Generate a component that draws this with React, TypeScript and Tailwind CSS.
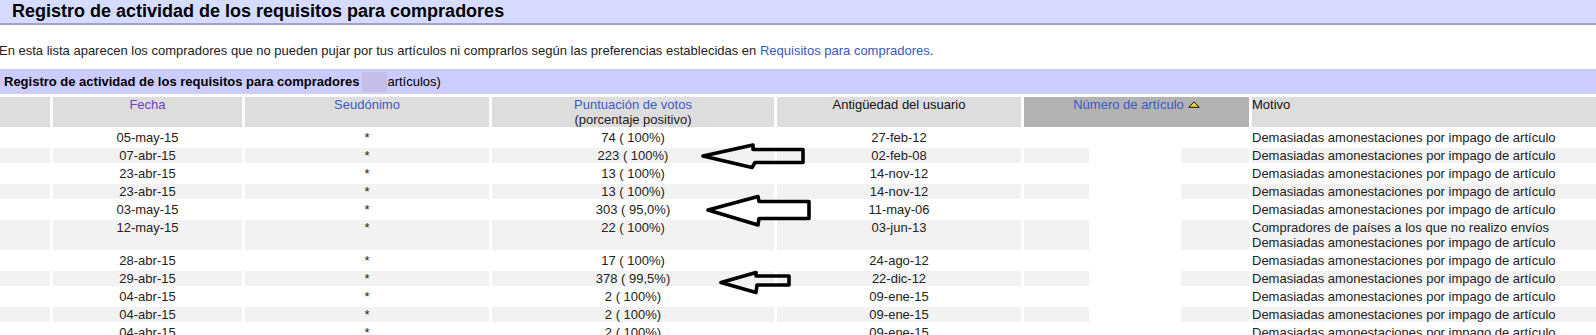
import React from 'react';

interface BlockedRow {
  date: string;
  score: string;
  since: string;
  reasons: string[];
}

const IMPAGO = 'Demasiadas amonestaciones por impago de artículo';

const rows: BlockedRow[] = [
  { date: '05-may-15', score: '74 ( 100%)', since: '27-feb-12', reasons: [IMPAGO] },
  { date: '07-abr-15', score: '223 ( 100%)', since: '02-feb-08', reasons: [IMPAGO] },
  { date: '23-abr-15', score: '13 ( 100%)', since: '14-nov-12', reasons: [IMPAGO] },
  { date: '23-abr-15', score: '13 ( 100%)', since: '14-nov-12', reasons: [IMPAGO] },
  { date: '03-may-15', score: '303 ( 95,0%)', since: '11-may-06', reasons: [IMPAGO] },
  {
    date: '12-may-15',
    score: '22 ( 100%)',
    since: '03-jun-13',
    reasons: ['Compradores de países a los que no realizo envíos', IMPAGO],
  },
  { date: '28-abr-15', score: '17 ( 100%)', since: '24-ago-12', reasons: [IMPAGO] },
  { date: '29-abr-15', score: '378 ( 99,5%)', since: '22-dic-12', reasons: [IMPAGO] },
  { date: '04-abr-15', score: '2 ( 100%)', since: '09-ene-15', reasons: [IMPAGO] },
  { date: '04-abr-15', score: '2 ( 100%)', since: '09-ene-15', reasons: [IMPAGO] },
  { date: '04-abr-15', score: '2 ( 100%)', since: '09-ene-15', reasons: [IMPAGO] },
];

// little yellow "sorted ascending" marker next to the column title
const SortUp = () => (
  <svg width="12" height="7" viewBox="0 0 12 7" className="inline-block ml-[4px] align-[1px]">
    <polygon points="6,0.8 11.2,6.3 0.8,6.3" fill="#f7d21a" stroke="#111" strokeWidth="1" />
  </svg>
);

// hand drawn arrows that were pasted over the screenshot
const Arrows = () => (
  <svg
    className="absolute left-0 top-0 pointer-events-none"
    width="1596"
    height="335"
    viewBox="0 0 1596 335"
  >
    <g fill="none" stroke="#000" strokeWidth="3.6" strokeLinejoin="round" strokeLinecap="round">
      <polygon points="703,156 753,145 753,149.5 803,149.5 803,162.5 755,162.5 752,167.5" />
      <polygon points="708,210 758,196.5 759,201.5 809,201.5 809,218.5 759,218.5 758,225" />
      <polygon points="721,282.5 756,272.5 756,276 789,276 789,285 757,285 756,292.5" />
    </g>
  </svg>
);

const App = () => {
  return (
    <div className="relative h-[335px] w-[1596px] overflow-hidden bg-white font-['Liberation_Sans',Arial,sans-serif] text-[13px] leading-[15px] text-[#222]">
      <div className="h-[25px] bg-[#d6dcff] border-b-2 border-[#a19fd4] pl-[12px] text-[18px] leading-[23px] font-bold text-black">
        Registro de actividad de los requisitos para compradores
      </div>

      <div className="mt-[18px] -ml-px h-[15px] whitespace-nowrap">
        En esta lista aparecen los compradores que no pueden pujar por tus artículos ni comprarlos según las
        preferencias establecidas en{' '}
        <a href="#" className="text-[#3559c4]">
          Requisitos para compradores
        </a>
        .
      </div>

      <div className="mt-[11px] h-[25px] bg-[#ccccff] pl-[4px] leading-[25px] text-black whitespace-nowrap flex items-center">
        <span className="font-bold">Registro de actividad de los requisitos para compradores</span>
        <span className="ml-[3px] inline-block w-[25px] h-[20px] bg-[#c5bfe8]" />
        <span>artículos)</span>
      </div>

      <table className="table-fixed border-separate border-spacing-[3px] w-[1602px] -ml-[3px]">
        <colgroup>
          <col className="w-[50px]" />
          <col className="w-[189px]" />
          <col className="w-[244px]" />
          <col className="w-[282px]" />
          <col className="w-[244px]" />
          <col className="w-[225px]" />
          <col className="w-[344px]" />
        </colgroup>
        <thead>
          <tr className="h-[30px]">
            <th className="p-0 bg-[#dddddd]" />
            <th className="p-0 align-top font-normal bg-[#dddddd] text-center">
              <a href="#" className="text-[#7440c4]">Fecha</a>
            </th>
            <th className="p-0 align-top font-normal bg-[#dddddd] text-center">
              <a href="#" className="text-[#3a5ac6]">Seudónimo</a>
            </th>
            <th className="p-0 align-top font-normal bg-[#dddddd] text-center">
              <a href="#" className="text-[#3a5ac6]">Puntuación de votos</a>
              <br />
              (porcentaje positivo)
            </th>
            <th className="p-0 align-top font-normal bg-[#dddddd] text-center text-[#111]">
              Antigüedad del usuario
            </th>
            <th className="p-0 align-top font-normal bg-[#b3b3b3] text-center whitespace-nowrap">
              <a href="#" className="text-[#3a5ac6]">Número de artículo</a>
              <SortUp />
            </th>
            <th className="p-0 align-top font-normal bg-[#dddddd] text-left text-[#111]">Motivo</th>
          </tr>
        </thead>
        <tbody>
          {rows.map((r, i) => {
            const bg = i % 2 === 1 ? 'bg-[#f2f2f2]' : 'bg-white';
            const tall = r.reasons.length > 1;
            return (
              <tr key={i}>
                <td className={`p-0 ${bg}`} />
                <td className={`p-0 align-top text-center ${bg}`}>{r.date}</td>
                <td className={`p-0 align-top text-center ${bg}`}>*</td>
                <td className={`p-0 align-top text-center ${bg}`}>{r.score}</td>
                <td className={`p-0 align-top text-center ${bg}`}>{r.since}</td>
                <td className={`p-0 align-top ${bg}`}>
                  {/* item number blanked out in the original */}
                  <div className="flex">
                    <div className="w-[65px] shrink-0" />
                    <div className={`w-[92px] shrink-0 bg-white ${tall ? 'h-[30px]' : 'h-[15px]'}`} />
                  </div>
                </td>
                <td className={`p-0 align-top text-left whitespace-nowrap ${bg}`}>
                  {r.reasons.map((m, j) => (
                    <div key={j}>{m}</div>
                  ))}
                </td>
              </tr>
            );
          })}
        </tbody>
      </table>

      <Arrows />
    </div>
  );
};

export default App;
